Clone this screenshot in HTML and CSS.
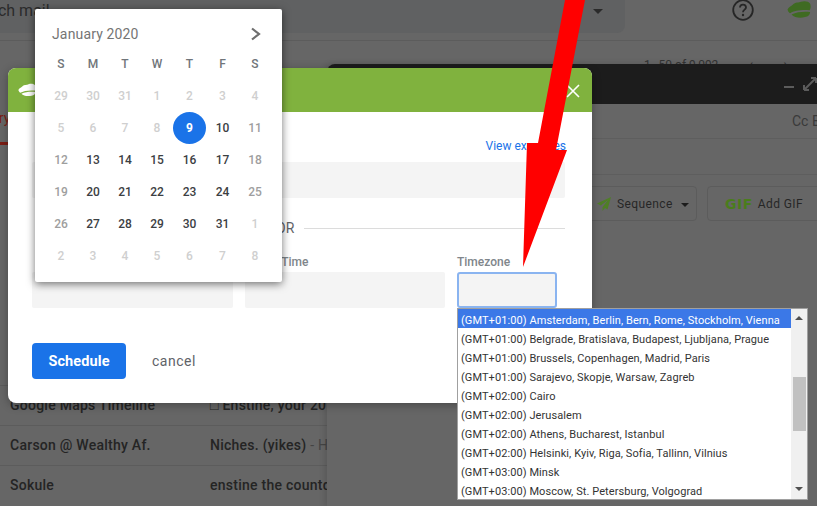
FILE: index.html
```html
<!DOCTYPE html>
<html lang="en">
<head>
    <meta charset="UTF-8">
    <meta name="viewport" content="width=device-width, initial-scale=1.0">
    <title>Schedule email</title>
    <link rel="stylesheet" href="styles.css">
</head>
<body>
    <div class="page">
        <!-- dimmed mail app behind the dialog -->
        <div class="mail">
            <div class="topbar">
                <div class="search">
                    <span class="search-text">Search mail</span>
                    <span class="search-caret"></span>
                </div>
                <svg class="help-icon" width="24" height="24" viewBox="0 0 24 24">
                    <circle cx="12" cy="12" r="9.800" fill="none" stroke="#262626" stroke-width="1.800"/>
                    <path d="M9 9.600a3 3 0 0 1 6 0c0 2-3 2.200-3 4.600" fill="none" stroke="#262626" stroke-width="1.800"/>
                    <circle cx="12" cy="17" r="1.200" fill="#262626"/>
                </svg>
                <svg class="brand-icon" width="24" height="17" viewBox="0 0 24 17">
                    <path d="M.5 8.500C1.500 6 4 5.500 6 3.500C8 1 12 2 14 .8C17 -.3 21.500 0 23 2.500C24.300 5 23.500 8 22.500 9.300C16 8.500 7 9.500 3 12.300C1.800 11.500 .8 10 .5 8.500Z" fill="#3f6b22"/>
                    <path d="M4.500 13.500C10 11 16 10.500 23 11C23.300 13.500 21.500 15.500 18 16C14 17.200 7.500 17 4.500 13.500Z" fill="#3f6b22"/>
                </svg>
            </div>
            <div class="toolbar">
                <div class="dots"><i></i><i></i></div>
                <div class="pager">
                    <span>1–50 of 9,092</span>
                    <span class="pager-arrow">‹</span>
                    <span class="pager-arrow">›</span>
                </div>
            </div>
            <div class="tabs">
                <span class="tab-active">Primary</span>
            </div>
            <div class="mail-list">
                <div class="mail-row">
                    <span class="sender">Google Maps Timeline</span>
                    <span class="subject">□ Enstine, your 2019 update</span>
                </div>
                <div class="mail-row">
                    <span class="sender">Carson @ Wealthy Af.</span>
                    <span class="subject">Niches. (yikes) <em>- Hey there</em></span>
                </div>
                <div class="mail-row">
                    <span class="sender">Sokule</span>
                    <span class="subject">enstine the countdown is on</span>
                </div>
            </div>
        </div>

        <div class="compose">
            <div class="compose-head">
                <span class="compose-min"></span>
                <svg class="compose-expand" width="14" height="14" viewBox="0 0 14 14">
                    <path d="M1 13V8M1 13H6M1 13L13 1M13 1H8M13 1V6" fill="none" stroke="#5c5c5c" stroke-width="2"/>
                </svg>
            </div>
            <div class="compose-line compose-to"><span>Cc Bcc</span></div>
            <div class="compose-line"></div>
            <div class="compose-tools">
                <div class="tool-btn seq-btn">
                    <svg width="14" height="14" viewBox="0 0 14 14"><path d="M14 0L0 6.500L3.800 8.500L11 3L5.500 10V14L8 11L10.500 12.500Z" fill="#4f7f26"/></svg>
                    <span>Sequence</span>
                    <span class="tool-caret"></span>
                </div>
                <div class="tool-btn gif-btn">
                    <b>GIF</b>
                    <span>Add GIF</span>
                </div>
            </div>
        </div>

        <div class="dialog">
            <div class="dialog-head">
                <svg width="18" height="16" viewBox="0 0 24 17">
                    <path d="M.5 8.500C1.500 6 4 5.500 6 3.500C8 1 12 2 14 .8C17 -.3 21.500 0 23 2.500C24.300 5 23.500 8 22.500 9.300C16 8.500 7 9.500 3 12.300C1.800 11.500 .8 10 .5 8.500Z" fill="#fff"/>
                    <path d="M4.500 13.500C10 11 16 10.500 23 11C23.300 13.500 21.500 15.500 18 16C14 17.200 7.500 17 4.500 13.500Z" fill="#fff"/>
                </svg>
                <svg class="dialog-close" width="14" height="14" viewBox="0 0 14 14">
                    <path d="M1 1L13 13M13 1L1 13" stroke="#fff" stroke-width="1.600"/>
                </svg>
            </div>
            <div class="dialog-body">
                <a class="examples-link">View examples</a>
                <div class="field-box wide-box"></div>
                <div class="or-row">
                    <span class="or-left"></span>
                    <span class="or-text">OR</span>
                    <span class="or-line"></span>
                </div>
                <div class="date-fields">
                    <div>
                        <label class="field-label"></label>
                        <div class="field-box"></div>
                    </div>
                    <div>
                        <label class="field-label">Select Time</label>
                        <div class="field-box"></div>
                    </div>
                    <div>
                        <label class="field-label">Timezone</label>
                        <div class="field-box focused"></div>
                    </div>
                </div>
                <div class="dialog-actions">
                    <button class="btn-schedule">Schedule</button>
                    <span class="btn-cancel">cancel</span>
                </div>
            </div>
        </div>

        <div class="calendar">
            <div class="cal-head">
                <span class="cal-title">January 2020</span>
                <svg width="12" height="14" viewBox="0 0 12 14"><path d="M2 1.500L9 7L2 12.500" fill="none" stroke="#6f6f6f" stroke-width="2.200"/></svg>
            </div>
            <div class="cal-grid">
                <span class="wd">S</span><span class="wd">M</span><span class="wd">T</span><span class="wd">W</span><span class="wd">T</span><span class="wd">F</span><span class="wd">S</span>
                <span class="off">29</span><span class="off">30</span><span class="off">31</span><span class="off">1</span><span class="off">2</span><span class="off">3</span><span class="off">4</span>
                <span class="off">5</span><span class="off">6</span><span class="off">7</span><span class="off">8</span><span class="today">9</span><span>10</span><span class="we">11</span>
                <span class="we">12</span><span>13</span><span>14</span><span>15</span><span>16</span><span>17</span><span class="we">18</span>
                <span class="we">19</span><span>20</span><span>21</span><span>22</span><span>23</span><span>24</span><span class="we">25</span>
                <span class="we">26</span><span>27</span><span>28</span><span>29</span><span>30</span><span>31</span><span class="off">1</span>
                <span class="off">2</span><span class="off">3</span><span class="off">4</span><span class="off">5</span><span class="off">6</span><span class="off">7</span><span class="off">8</span>
            </div>
        </div>

        <div class="tz-list">
            <div class="tz-options">
                <div class="tz-option selected">(GMT+01:00) Amsterdam, Berlin, Bern, Rome, Stockholm, Vienna</div>
                <div class="tz-option">(GMT+01:00) Belgrade, Bratislava, Budapest, Ljubljana, Prague</div>
                <div class="tz-option">(GMT+01:00) Brussels, Copenhagen, Madrid, Paris</div>
                <div class="tz-option">(GMT+01:00) Sarajevo, Skopje, Warsaw, Zagreb</div>
                <div class="tz-option">(GMT+02:00) Cairo</div>
                <div class="tz-option">(GMT+02:00) Jerusalem</div>
                <div class="tz-option">(GMT+02:00) Athens, Bucharest, Istanbul</div>
                <div class="tz-option">(GMT+02:00) Helsinki, Kyiv, Riga, Sofia, Tallinn, Vilnius</div>
                <div class="tz-option">(GMT+03:00) Minsk</div>
                <div class="tz-option">(GMT+03:00) Moscow, St. Petersburg, Volgograd</div>
            </div>
            <div class="tz-scroll">
                <span class="arrow-up"></span>
                <span class="thumb"></span>
                <span class="arrow-down"></span>
            </div>
        </div>

        <!-- red annotation arrow drawn on the screenshot -->
        <svg class="red-arrow" width="817" height="506" viewBox="0 0 817 506">
            <polygon points="565,0 585,0 556,150 567,150 523,267 527,143 538,143" fill="#ff0000"/>
        </svg>
    </div>
</body>
</html>
```

FILE: styles.css
```css
html, body {
    margin: 0;
    padding: 0;
}
body {
    font-family: Roboto, Arial, sans-serif;
    background-color: #666;
}
.page {
    position: relative;
    width: 817px;
    height: 506px;
    overflow: hidden;
    background-color: #666;
}

/* mail app */
.mail {
    display: flex;
    flex-direction: column;
    height: 506px;
}
.topbar {
    display: flex;
    align-items: flex-start;
    height: 41px;
    border-bottom: 1px solid #5c5c5c;
    box-sizing: border-box;
}
.search {
    display: flex;
    align-items: center;
    justify-content: space-between;
    width: 625px;
    height: 33px;
    padding-right: 22px;
    box-sizing: border-box;
    background-color: #606162;
    border-radius: 0 0 8px 0;
    overflow: hidden;
}
.search-text {
    margin-left: -34px;
    margin-top: -12px;
    font-size: 16px;
    color: #2b2b2b;
}
.search-caret {
    margin-top: -11px;
    border-left: 5px solid transparent;
    border-right: 5px solid transparent;
    border-top: 5px solid #2a2a2a;
}
.help-icon {
    margin: -2px 0 0 106px;
}
.brand-icon {
    margin: 1px 0 0 32px;
}
.toolbar {
    display: flex;
    justify-content: space-between;
    height: 22px;
}
.dots {
    display: flex;
    flex-direction: column;
    gap: 3px;
    margin: 19px 0 0 29px;
}
.dots i {
    display: block;
    width: 3px;
    height: 3px;
    border-radius: 50%;
    background-color: #262626;
}
.pager {
    display: flex;
    gap: 30px;
    padding: 17px 29px 0 0;
    font-size: 12px;
    color: #333;
}
.pager-arrow {
    font-size: 16px;
    line-height: 14px;
}
.tabs {
    height: 82px;
    overflow: hidden;
}
.tab-active {
    display: inline-block;
    margin-left: -38px;
    height: 82px;
    padding-top: 47px;
    box-sizing: border-box;
    font-size: 14px;
    color: #7b1d14;
    border-bottom: 3px solid #7b1d14;
}
.mail-list {
    flex: 1;
    display: flex;
    flex-direction: column;
    justify-content: flex-end;
    padding-bottom: 1px;
}
.mail-row {
    display: flex;
    align-items: center;
    height: 37px;
    padding: 0 0 2px 10px;
    border-top: 1px solid #5c5c5c;
    font-size: 14px;
    font-weight: 500;
    letter-spacing: .25px;
    color: #242424;
    white-space: nowrap;
}
.sender {
    width: 200px;
}
.subject em {
    font-style: normal;
    font-weight: 400;
    color: #444;
}

/* compose window */
.compose {
    position: absolute;
    left: 327px;
    top: 64px;
    width: 500px;
    height: 442px;
    background-color: #666;
    border-radius: 8px 0 0 0;
    box-shadow: -2px 0 6px rgba(0, 0, 0, .15);
}
.compose-head {
    display: flex;
    align-items: center;
    justify-content: flex-end;
    gap: 9px;
    height: 40px;
    padding-right: 10px;
    box-sizing: border-box;
    background-color: #1c1c1c;
    border-radius: 8px 0 0 0;
}
.compose-min {
    width: 10px;
    height: 2px;
    margin-top: 6px;
    background-color: #5c5c5c;
}
.compose-line {
    height: 35px;
    border-bottom: 1px solid #5e5e5e;
    box-sizing: border-box;
}
.compose-line + .compose-line {
    height: 36px;
}
.compose-to {
    display: flex;
    align-items: center;
    padding-left: 465px;
    font-size: 14px;
    color: #3a3a3a;
    white-space: nowrap;
}
.compose-tools {
    display: flex;
    gap: 10px;
    margin-top: 11px;
    padding-left: 215px;
}
.tool-btn {
    flex: none;
    display: flex;
    align-items: center;
    height: 35px;
    box-sizing: border-box;
    border: 1px solid #5c5c5c;
    border-radius: 4px;
    font-size: 12px;
    letter-spacing: .4px;
    color: #262626;
    white-space: nowrap;
}
.seq-btn {
    width: 155px;
    padding-left: 54px;
    gap: 6px;
}
.tool-caret {
    margin: 3px 0 0 2px;
    border-left: 4px solid transparent;
    border-right: 4px solid transparent;
    border-top: 4px solid #1c1c1c;
}
.gif-btn {
    width: 130px;
    padding-left: 17px;
    gap: 5px;
}
.gif-btn b {
    font-family: "DejaVu Sans", sans-serif;
    font-size: 14px;
    font-weight: 700;
    letter-spacing: .5px;
    color: #4a7d1c;
}

/* schedule dialog */
.dialog {
    position: absolute;
    left: 8px;
    top: 68px;
    width: 584px;
    background-color: #fff;
    border-radius: 8px;
    box-shadow: 0 2px 10px rgba(0, 0, 0, .3);
}
.dialog-head {
    display: flex;
    align-items: center;
    justify-content: space-between;
    height: 44px;
    padding: 0 12px 0 10px;
    box-sizing: border-box;
    background-color: #80b23e;
    border-radius: 8px 8px 0 0;
}
.dialog-close {
    margin-top: 1px;
}
.dialog-body {
    display: flex;
    flex-direction: column;
    padding: 26px 27px 24px 24px;
}
.examples-link {
    align-self: flex-end;
    height: 16px;
    line-height: 16px;
    margin-right: -1px;
    font-size: 12px;
    color: #1a73e8;
}
.field-box {
    height: 36px;
    box-sizing: border-box;
    background-color: #f4f4f4;
    border-radius: 2px;
}
.wide-box {
    margin-top: 8px;
}
.or-row {
    display: flex;
    align-items: center;
    gap: 10px;
    height: 16px;
    margin-top: 22px;
    font-size: 14px;
    color: #5f6368;
}
.or-line {
    flex: 1;
    height: 1px;
    background-color: #dcdcdc;
}
.or-left {
    width: 234px;
}
.date-fields {
    display: grid;
    grid-template-columns: 201px 200px 100px;
    gap: 12px;
    margin-top: 18px;
}
.field-label {
    display: block;
    height: 16px;
    line-height: 16px;
    margin-bottom: 2px;
    font-size: 12px;
    font-weight: 500;
    color: #80868b;
}
.focused {
    border: 2px solid #8ab4f0;
    border-radius: 3px;
}
.dialog-actions {
    display: flex;
    align-items: center;
    gap: 26px;
    margin-top: 35px;
}
.btn-schedule {
    width: 94px;
    height: 36px;
    padding: 0;
    border: none;
    border-radius: 4px;
    background-color: #1a73e8;
    color: #fff;
    font-family: Roboto, Arial, sans-serif;
    font-size: 14.500px;
    font-weight: 700;
    letter-spacing: .1px;
}
.btn-cancel {
    font-size: 14px;
    letter-spacing: .5px;
    color: #5f6368;
}

/* date picker */
.calendar {
    position: absolute;
    left: 35px;
    top: 9px;
    width: 247px;
    padding: 15px 11px 10px 10px;
    box-sizing: border-box;
    background-color: #fff;
    border-radius: 2px;
    box-shadow: 0 2px 8px rgba(0, 0, 0, .55);
}
.cal-head {
    display: flex;
    align-items: center;
    justify-content: space-between;
    height: 20px;
    margin-bottom: 4px;
    padding: 0 9px 0 7px;
}
.cal-title {
    font-size: 14px;
    letter-spacing: .15px;
    color: #757575;
}
.cal-grid {
    display: grid;
    grid-template-columns: 32px 32px 32px 32px 33px 33px 32px;
    grid-auto-rows: 32px;
    font-size: 12px;
    font-weight: 500;
    color: #3c4043;
}
.cal-grid span {
    display: flex;
    align-items: center;
    justify-content: center;
}
.cal-grid .wd {
    color: #70757a;
}
.cal-grid .off {
    color: #cfcfcf;
}
.cal-grid .we {
    color: #9e9e9e;
}
.cal-grid .today {
    border-radius: 50%;
    background-color: #1a73e8;
    color: #fff;
    font-weight: 700;
}

/* timezone dropdown */
.tz-list {
    position: absolute;
    left: 457px;
    top: 308px;
    display: flex;
    width: 351px;
    height: 192px;
    box-sizing: border-box;
    border: 1px solid #a0a0a0;
    background-color: #fff;
}
.tz-options {
    flex: 1;
    overflow: hidden;
}
.tz-option {
    height: 19px;
    line-height: 24px;
    padding-left: 3px;
    font-size: 11px;
    letter-spacing: .08px;
    color: #333;
    white-space: nowrap;
}
.tz-option.selected {
    background-color: #3b78e7;
    color: #fff;
}
.tz-scroll {
    display: flex;
    flex-direction: column;
    align-items: center;
    width: 16px;
    background-color: #f0f0f0;
}
.arrow-up, .arrow-down {
    border-left: 4px solid transparent;
    border-right: 4px solid transparent;
}
.arrow-up {
    margin-top: 7px;
    border-bottom: 4px solid #505050;
}
.thumb {
    width: 13px;
    height: 54px;
    margin: 57px 0 56px;
    background-color: #c1c1c1;
}
.arrow-down {
    border-top: 4px solid #505050;
}

.red-arrow {
    position: absolute;
    left: 0;
    top: 0;
    pointer-events: none;
}
```
